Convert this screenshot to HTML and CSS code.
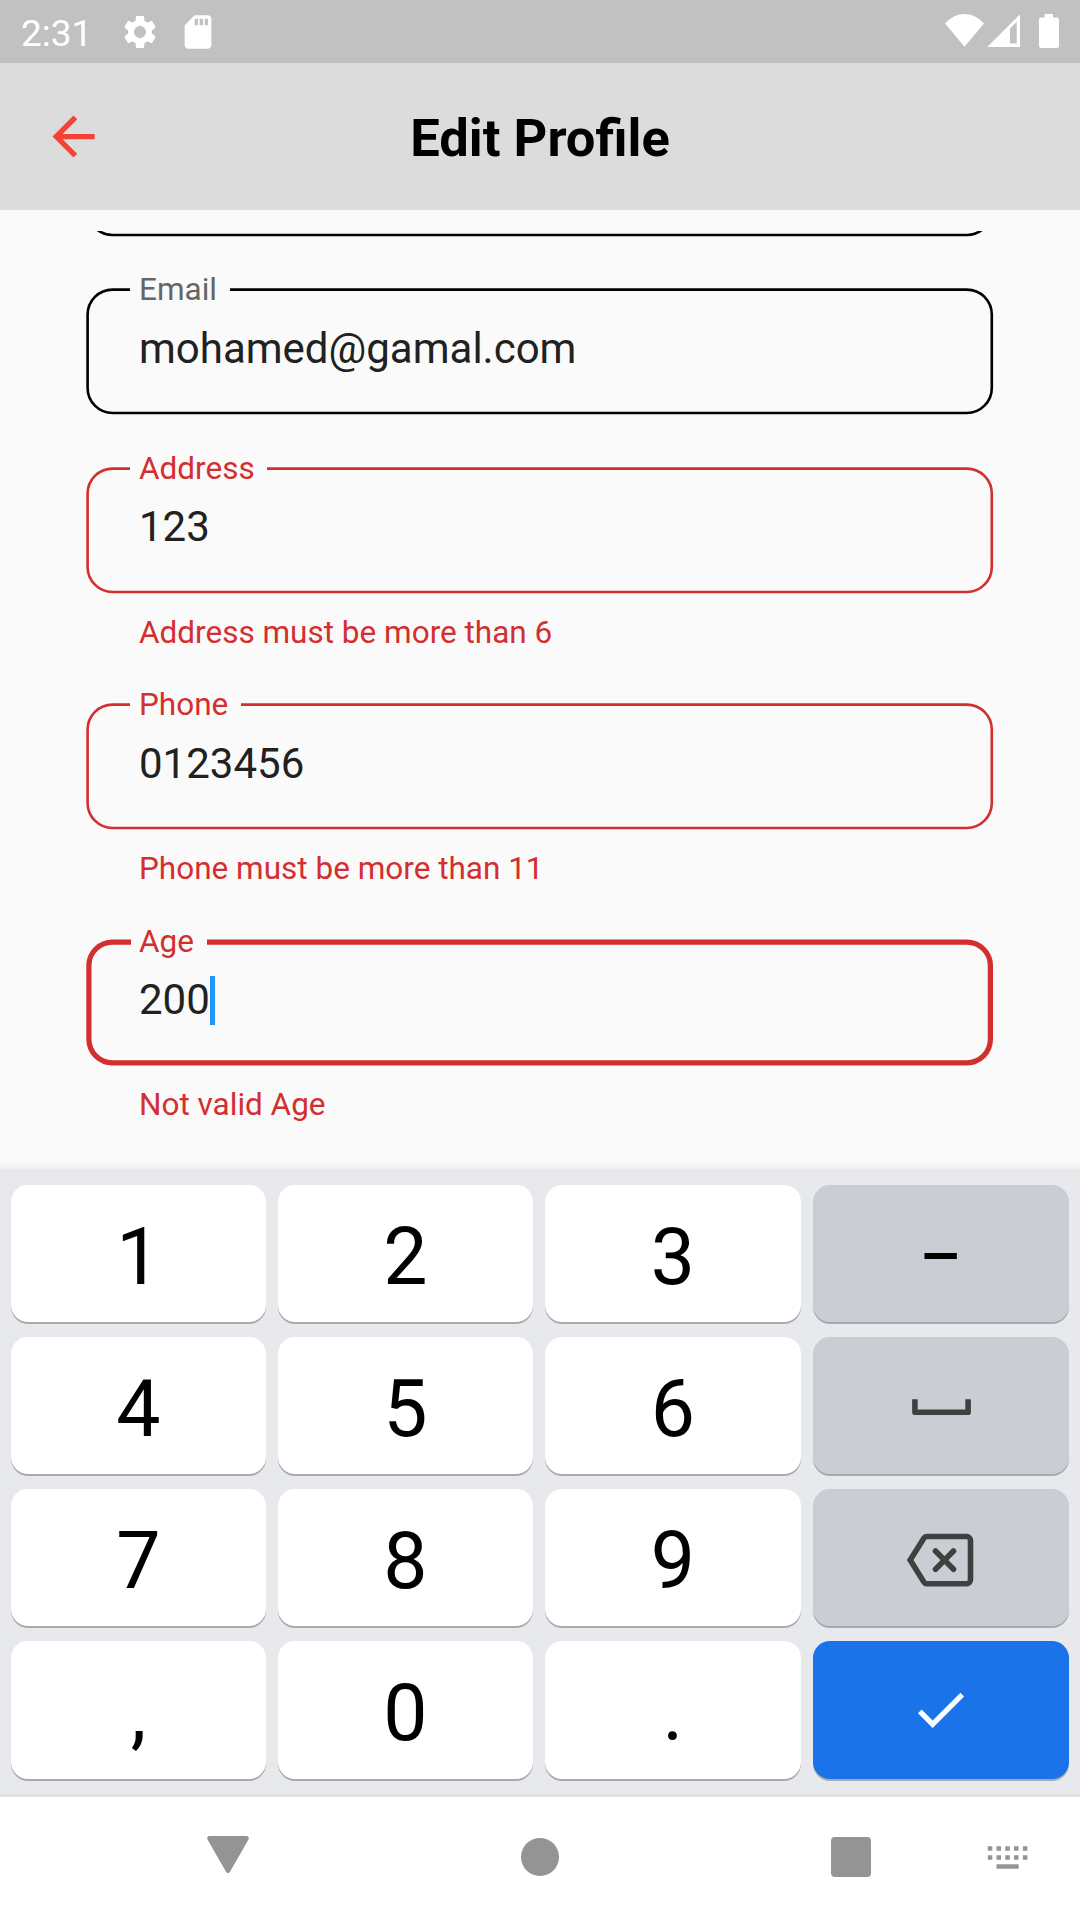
FILE: index.html
```html
<!DOCTYPE html>
<html lang="en">
<head>
<meta charset="utf-8">
<title>Edit Profile</title>
<link rel="stylesheet" href="styles.css">
</head>
<body>
<div class="screen">
  <div class="status-bar">
    <span class="clock">2:31</span>
    <svg class="status-icon gear" viewBox="0 0 24 24"><path d="M19.14 12.94c.04-.3.06-.61.06-.94 0-.32-.02-.64-.07-.94l2.03-1.58c.18-.14.23-.41.12-.61l-1.92-3.32c-.12-.22-.37-.29-.59-.22l-2.39.96c-.5-.38-1.03-.7-1.62-.94l-.36-2.54c-.04-.24-.24-.41-.48-.41h-3.84c-.24 0-.43.17-.47.41l-.36 2.54c-.59.24-1.13.57-1.62.94l-2.39-.96c-.22-.08-.47 0-.59.22L2.74 8.87c-.12.21-.08.47.12.61l2.03 1.58c-.05.3-.09.63-.09.94s.02.64.07.94l-2.03 1.58c-.18.14-.23.41-.12.61l1.92 3.32c.12.22.37.29.59.22l2.39-.96c.5.38 1.03.7 1.62.94l.36 2.54c.05.24.24.41.48.41h3.84c.24 0 .44-.17.47-.41l.36-2.54c.59-.24 1.13-.56 1.62-.94l2.39.96c.22.08.47 0 .59-.22l1.92-3.32c.12-.22.07-.47-.12-.61l-2.01-1.58zM12 15.6c-1.98 0-3.6-1.62-3.6-3.6s1.62-3.6 3.6-3.6 3.6 1.62 3.6 3.6-1.62 3.6-3.6 3.6z"/></svg>
    <svg class="status-icon card" viewBox="0 0 24 24"><path d="M18 2h-8L4 8v12c0 1.1.9 2 2 2h12c1.1 0 2-.9 2-2V4c0-1.1-.9-2-2-2zm-6 6h-2V4h2v4zm3 0h-2V4h2v4zm3 0h-2V4h2v4z"/></svg>
    <svg class="radios" width="120" height="63" viewBox="940 0 120 63">
      <path d="M945 23.5Q953.5 14 964.5 14T984 23.5L964.5 46.7z"/>
      <path fill-rule="evenodd" d="M1020 14.3V47h-32.7zM1010 28.5V43.4h6.7V21.8z"/>
      <path d="M1044.7 14h8.3v3.4h4a2 2 0 0 1 2 2V46a2 2 0 0 1-2 2h-16a2 2 0 0 1-2-2V19.4a2 2 0 0 1 2-2h3.7z"/>
    </svg>
  </div>

  <header class="app-bar">
    <svg class="back" viewBox="0 0 24 24"><path d="M20 11H7.83l5.59-5.59L12 4l-8 8 8 8 1.41-1.41L7.83 13H20v-2z"/></svg>
    <h1>Edit Profile</h1>
  </header>

  <main class="content">
    <div class="form">
      <div class="field plain">
        <svg class="outline"><rect x="1.6" y="1.6" width="904.2" height="123.4" rx="25"/></svg>
      </div>
      <div class="field plain">
        <svg class="outline"><rect x="1.6" y="1.6" width="904.2" height="123.4" rx="25"/></svg>
        <label class="label email">Email</label>
        <div class="value">mohamed@gamal.com</div>
      </div>
      <div class="field error upper">
        <svg class="outline"><rect x="1.6" y="1.6" width="904.2" height="123.4" rx="25"/></svg>
        <label class="label address">Address</label>
        <div class="value">123</div>
        <p class="helper">Address must be more than 6</p>
      </div>
      <div class="field error">
        <svg class="outline"><rect x="1.6" y="1.6" width="904.2" height="123.4" rx="25"/></svg>
        <label class="label phone">Phone</label>
        <div class="value">0123456</div>
        <p class="helper">Phone must be more than 11</p>
      </div>
      <div class="field error focused">
        <svg class="outline"><rect x="2.9" y="3.1" width="901.5" height="120.7" rx="23.6"/></svg>
        <label class="label age">Age</label>
        <div class="value">200<span class="cursor"></span></div>
        <p class="helper">Not valid Age</p>
      </div>
    </div>
  </main>

  <section class="keyboard">
    <div class="key">1</div><div class="key">2</div><div class="key">3</div><div class="key side"><span class="dash">–</span></div>
    <div class="key">4</div><div class="key">5</div><div class="key">6</div>
    <div class="key side icon"><svg width="70" height="30" viewBox="906 1390.5 70 30"><path d="M914.9 1401.6v10.2h53.2v-10.2" fill="none" stroke="#404040" stroke-width="5.6" stroke-linejoin="round" stroke-linecap="square"/></svg></div>
    <div class="key">7</div><div class="key">8</div><div class="key">9</div>
    <div class="key side icon"><svg width="80" height="60" viewBox="901 1527.5 80 60"><g fill="none" stroke="#404040" stroke-width="5.6" stroke-linecap="round"><path d="M926.5 1536h40a4 4 0 0 1 4 4v39.2a4 4 0 0 1-4 4h-40q-1.5 0-2.500-1.500L910.200 1559.600 924 1537.500q1-1.500 2.500-1.500z"/><path d="M935.500 1550.500l18 18.200M953.500 1550.500l-18 18.200"/></g></svg></div>
    <div class="key">,</div><div class="key">0</div><div class="key">.</div>
    <div class="key enter icon"><svg class="check" width="63" height="63" viewBox="0 0 24 24"><path fill="#fff" d="M9 16.17L4.83 12l-1.42 1.41L9 19 21 7l-1.41-1.41z"/></svg></div>
  </section>

  <nav class="nav-bar">
    <svg class="nav-back" width="44" height="40" viewBox="206 1835 44 40"><path d="M209.500 1838.300h37L228 1870.700z" stroke="#949494" stroke-width="4.600" stroke-linejoin="round"/></svg>
    <span class="nav-home"></span>
    <span class="nav-recent"></span>
    <svg class="nav-ime" width="42" height="24" viewBox="987 1846 42 24"><path d="M987.800 1846.300h4.500v4.500h-4.500zM996.500 1846.300h4.500v4.500h-4.500zM1005.300 1846.300h4.500v4.500h-4.500zM1014 1846.300h4.500v4.500h-4.500zM1022.900 1846.300h4.500v4.500h-4.500zM987.800 1855.200h4.500v4.500h-4.500zM996.500 1855.200h4.500v4.500h-4.500zM1005.300 1855.200h4.500v4.500h-4.500zM1014 1855.200h4.500v4.500h-4.500zM1022.900 1855.200h4.500v4.500h-4.500zM996.500 1864.200h22.200v4.500h-22.200z"/></svg>
  </nav>
</div>
</body>
</html>
```
FILE: styles.css
```css
* {
  box-sizing: border-box;
  margin: 0;
}

body {
  background: #fafafa;
  font-family: Roboto, sans-serif;
}

svg {
  display: block;
  flex: none;
}

.screen {
  display: flex;
  flex-direction: column;
  width: 1080px;
  height: 1920px;
  overflow: hidden;
}

/* Status bar */
.status-bar {
  display: flex;
  height: 63px;
  padding: 0 20px 0 21px;
  background: #c1c1c1;
  color: #fff;
  fill: #fff;
}

.clock {
  width: 99px;
  font-size: 37px;
  line-height: 67px;
}

.status-icon {
  width: 40px;
  height: 40px;
  margin-top: 12px;
}

.card {
  margin-left: 18px;
}

.radios {
  margin-left: auto;
}

/* App bar */
.app-bar {
  display: flex;
  align-items: center;
  height: 147px;
  padding: 0 42px;
  background: #dcdcdc;
}

.back {
  width: 63px;
  height: 63px;
  fill: #f44336;
}

.app-bar h1 {
  flex: 1;
  margin-right: 63px;
  padding-top: 2px;
  color: #000;
  font-size: 52.5px;
  font-weight: 700;
  line-height: 62px;
  text-align: center;
}

/* Form */
.content {
  height: 959px;
  padding: 21px 86px 0;
  background: linear-gradient(#fafafa 952px, #efefef 959px);
}

.form {
  height: 938px;
  overflow: hidden;
}

.field {
  position: relative;
  height: 236px;
  padding: 36px 0 0 53px;
}

.field.plain {
  height: 179px;
}

.field:first-child {
  height: 178px;
  margin-top: -121px;
}

.field.upper {
  padding-top: 35px;
}

.outline {
  position: absolute;
  inset: 0;
  width: 908px;
  height: 128px;
  fill: none;
  stroke: #000;
  stroke-width: 2.625;
}

.error .outline {
  stroke: #d32f2f;
}

.focused .outline {
  stroke-width: 5.25;
}

/* The floating label covers the border behind it */
.label {
  position: absolute;
  top: -17px;
  left: 44px;
  padding-left: 9px;
  background: #fafafa;
  color: #666;
  font-size: 31.5px;
  line-height: 38px;
}

.error .label,
.helper {
  color: #d32f2f;
}

.email {
  width: 100px;
}

.address {
  width: 137px;
}

.phone {
  width: 111px;
}

.age {
  top: -16px;
  left: 45px;
  width: 76px;
  padding-left: 8px;
}

.value {
  display: flex;
  align-items: center;
  height: 50px;
  color: #212121;
  font-size: 42px;
  line-height: 50px;
}

.cursor {
  width: 5px;
  height: 49px;
  background: #2196f3;
}

.helper {
  padding-top: 61px;
  font-size: 31.5px;
  line-height: 38px;
}

.upper .helper {
  padding-top: 62px;
}

/* Numeric keyboard */
.keyboard {
  display: grid;
  grid-template-columns: 255px 255px 256px 256px;
  grid-template-rows: 137px 137px 137px 138px;
  gap: 15px 12px;
  height: 625px;
  padding: 16px 11px 0;
  background: #e8e9ed;
}

.key {
  display: flex;
  align-items: center;
  justify-content: center;
  padding-top: 6px;
  border-radius: 17px;
  background: #fff;
  box-shadow: 0 2px 0 #a9aaad;
  color: #000;
  font-size: 78.75px;
  line-height: 92px;
}

.key.icon {
  padding-top: 0;
}

.side {
  background: #cbcdd5;
}

.dash {
  transform: scaleX(0.84);
}

.enter {
  background: #1b73e9;
}

.check {
  margin: 0 2px 2px 0;
}

/* Navigation bar */
.nav-bar {
  display: flex;
  height: 126px;
  padding-left: 206px;
  border-top: 3px solid #e0e0e0;
  background: #fff;
  fill: #949494;
}

.nav-back {
  margin-top: 38px;
}

.nav-home {
  width: 38px;
  height: 38px;
  margin: 41px 0 0 271px;
  border-radius: 50%;
  background: #949494;
}

.nav-recent {
  width: 40px;
  height: 40px;
  margin: 40px 0 0 272px;
  border-radius: 4px;
  background: #949494;
}

.nav-ime {
  margin: 49px 0 0 116px;
}
```
